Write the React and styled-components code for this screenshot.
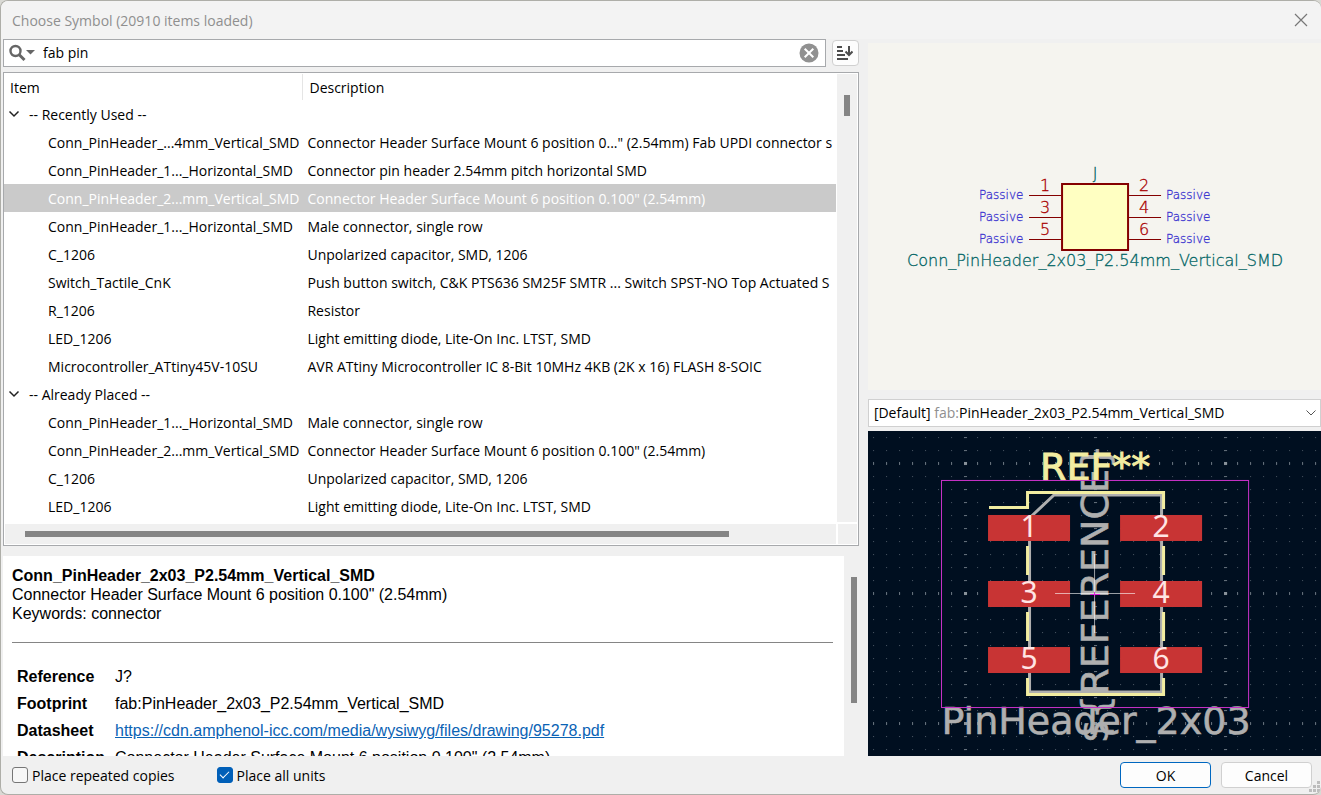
import React, { useState } from "react";
import styled, { createGlobalStyle } from "styled-components";

const recentlyUsed = [
  ["Conn_PinHeader_...4mm_Vertical_SMD", 'Connector Header Surface Mount 6 position 0..." (2.54mm) Fab UPDI connector s'],
  ["Conn_PinHeader_1..._Horizontal_SMD", "Connector pin header 2.54mm pitch horizontal SMD"],
  ["Conn_PinHeader_2...mm_Vertical_SMD", 'Connector Header Surface Mount 6 position 0.100" (2.54mm)'],
  ["Conn_PinHeader_1..._Horizontal_SMD", "Male connector, single row"],
  ["C_1206", "Unpolarized capacitor, SMD, 1206"],
  ["Switch_Tactile_CnK", "Push button switch, C&K PTS636 SM25F SMTR ... Switch SPST-NO Top Actuated S"],
  ["R_1206", "Resistor"],
  ["LED_1206", "Light emitting diode, Lite-On Inc. LTST, SMD"],
  ["Microcontroller_ATtiny45V-10SU", "AVR ATtiny Microcontroller IC 8-Bit 10MHz 4KB (2K x 16) FLASH 8-SOIC"],
];

const alreadyPlaced = [
  ["Conn_PinHeader_1..._Horizontal_SMD", "Male connector, single row"],
  ["Conn_PinHeader_2...mm_Vertical_SMD", 'Connector Header Surface Mount 6 position 0.100" (2.54mm)'],
  ["C_1206", "Unpolarized capacitor, SMD, 1206"],
  ["LED_1206", "Light emitting diode, Lite-On Inc. LTST, SMD"],
];

const groups = [
  { id: "recent", title: "-- Recently Used --", rows: recentlyUsed },
  { id: "placed", title: "-- Already Placed --", rows: alreadyPlaced },
];

function SymbolTree() {
  const [selected, setSelected] = useState("recent-2");
  const [closed, setClosed] = useState({});

  return (
    <Tree>
      <TreeBody>
        <TreeView>
          <TreeTable>
            <thead>
              <tr>
                <ItemHead>Item</ItemHead>
                <DescHead>Description</DescHead>
              </tr>
            </thead>
            {groups.map((group) => (
              <tbody key={group.id}>
                <tr>
                  <td colSpan={2}>
                    <GroupButton onClick={() => setClosed({ ...closed, [group.id]: !closed[group.id] })}>
                      <svg width="12" height="12" viewBox="0 0 12 12">
                        <path d="M1.5 3.5 6 8l4.5-4.5" fill="none" stroke="#222" strokeWidth="1.5" />
                      </svg>
                      {group.title}
                    </GroupButton>
                  </td>
                </tr>
                {!closed[group.id] && group.rows.map(([name, desc], index) => (
                  <Row
                    key={index}
                    $selected={selected === `${group.id}-${index}`}
                    onClick={() => setSelected(`${group.id}-${index}`)}
                  >
                    <NameCell>{name}</NameCell>
                    <DescCell>{desc}</DescCell>
                  </Row>
                ))}
              </tbody>
            ))}
          </TreeTable>
        </TreeView>
        <TreeScroll>
          <TreeThumb />
        </TreeScroll>
      </TreeBody>
      <TreeFoot>
        <HorizontalScroll>
          <HorizontalThumb />
        </HorizontalScroll>
        <ScrollCorner />
      </TreeFoot>
    </Tree>
  );
}

function SymbolPreview() {
  return (
    <SymbolCanvas viewBox="0 0 453 347" role="img" aria-label="Symbol preview">
      <PartText x="227" y="136">J</PartText>
      <rect x="194" y="141" width="66" height="66" fill="#ffffc2" stroke="#840000" strokeWidth="2" />
      {[0, 1, 2].map((i) => (
        <g key={i}>
          <path d={`M161 ${152.5 + i * 22}H193M261 ${152.5 + i * 22}H293`} stroke="#840000" strokeWidth="1.2" />
          <PinNumber x="177" y={148 + i * 22}>{i * 2 + 1}</PinNumber>
          <PinNumber x="276" y={148 + i * 22}>{i * 2 + 2}</PinNumber>
          <PinType x="111" y={156 + i * 22}>Passive</PinType>
          <PinType x="298" y={156 + i * 22}>Passive</PinType>
        </g>
      ))}
      <PartText x="227" y="223">Conn_PinHeader_2x03_P2.54mm_Vertical_SMD</PartText>
    </SymbolCanvas>
  );
}

function FootprintPreview() {
  const pads = [84, 150, 216];

  return (
    <FootprintCanvas viewBox="0 0 453 325" preserveAspectRatio="xMidYMid slice" role="img" aria-label="Footprint preview">
      <defs>
        <pattern id="minor" x="5" y="6" width="13" height="13" patternUnits="userSpaceOnUse">
          <rect width="1" height="1" fill="#46525f" />
        </pattern>
        <pattern id="row" x="5" y="31" width="13" height="130" patternUnits="userSpaceOnUse">
          <rect width="1" height="3" fill="#66717c" />
        </pattern>
        <pattern id="column" x="96" y="6" width="130" height="13" patternUnits="userSpaceOnUse">
          <rect width="3" height="1" fill="#66717c" />
        </pattern>
        <pattern id="major" x="96" y="31" width="130" height="130" patternUnits="userSpaceOnUse">
          <rect width="3" height="3" fill="#8a939b" />
        </pattern>
      </defs>
      {["minor", "row", "column", "major"].map((id) => (
        <rect key={id} width="453" height="325" fill={`url(#${id})`} />
      ))}
      <FabText transform="translate(240 163) rotate(-90)">{"${REFERENCE}"}</FabText>
      <FabText x="228" y="303">PinHeader_2x03</FabText>
      <path d="M161.5 87 186 64H293.5V261H161.5Z" fill="none" stroke="#afafaf" strokeWidth="3" />
      <g fill="none" stroke="#f2eda1" strokeWidth="3">
        <path d="M121 76.5H159.5V61.5H295.5V78" />
        <path d="M159.5 115V144M295.5 115V144M159.5 181V210M295.5 181V210" />
        <path d="M159.5 247V263.5H295.5V247" />
      </g>
      <SilkText x="172" y="49">REF**</SilkText>
      {pads.map((y, i) => (
        <g key={y}>
          <rect x="120" y={y} width="82" height="26" fill="#c83434" />
          <rect x="252" y={y} width="82" height="26" fill="#c83434" />
          <PadText x="161" y={y + 22}>{i * 2 + 1}</PadText>
          <PadText x="293" y={y + 22}>{i * 2 + 2}</PadText>
        </g>
      ))}
      <path d="M187 162.5H267M226.5 123V202" stroke="#fff" strokeOpacity="0.6" />
      <path d="M222 163.5H232M226.5 161V166" stroke="#d827d8" />
      <rect x="73.5" y="49.5" width="307" height="227" fill="none" stroke="#c832c8" />
    </FootprintCanvas>
  );
}

function App() {
  const [query, setQuery] = useState("fab pin");

  return (
    <>
      <GlobalStyle />
      <Dialog>
        <TitleBar>
          <Title>Choose Symbol (20910 items loaded)</Title>
          <CloseButton aria-label="Close">
            <svg width="14" height="14" viewBox="0 0 14 14">
              <path d="M1 1 13 13M13 1 1 13" stroke="#777" strokeWidth="1.2" />
            </svg>
          </CloseButton>
        </TitleBar>
        <Content>
          <LeftPane>
            <Toolbar>
              <SearchBox>
                <svg width="26" height="18" viewBox="0 0 26 18">
                  <circle cx="6.5" cy="7" r="5" fill="none" stroke="#666" strokeWidth="2.4" />
                  <path d="M10 10.5 15.5 16" stroke="#666" strokeWidth="3" />
                  <path d="M17 6h9l-4.5 4.5z" fill="#666" />
                </svg>
                <SearchInput aria-label="Search" value={query} onChange={(e) => setQuery(e.target.value)} />
                <IconButton aria-label="Clear search" onClick={() => setQuery("")}>
                  <svg width="20" height="20" viewBox="0 0 20 20">
                    <circle cx="10" cy="10" r="9.5" fill="#919191" />
                    <path d="M5.7 5.7 14.3 14.3M14.3 5.7 5.7 14.3" stroke="#fff" strokeWidth="2" />
                  </svg>
                </IconButton>
              </SearchBox>
              <SortButton aria-label="Sort">
                <svg width="16" height="14" viewBox="0 0 16 14">
                  <path d="M0 1h5M0 5h6M0 9h8M0 13h11" stroke="#4d4d4d" strokeWidth="2" />
                  <path d="M12 0v8M8.5 5.5 12 9l3.5-3.5" fill="none" stroke="#4d4d4d" strokeWidth="2" />
                </svg>
              </SortButton>
            </Toolbar>
            <SymbolTree />
            <Details>
              <DetailsText>
                <PartName>Conn_PinHeader_2x03_P2.54mm_Vertical_SMD</PartName>
                <p>Connector Header Surface Mount 6 position 0.100" (2.54mm)</p>
                <p>Keywords: connector</p>
                <Divider />
                <FieldTable>
                  <tbody>
                    <tr>
                      <th scope="row">Reference</th>
                      <td>J?</td>
                    </tr>
                    <tr>
                      <th scope="row">Footprint</th>
                      <td>fab:PinHeader_2x03_P2.54mm_Vertical_SMD</td>
                    </tr>
                    <tr>
                      <th scope="row">Datasheet</th>
                      <td>
                        <a href="https://cdn.amphenol-icc.com/media/wysiwyg/files/drawing/95278.pdf">
                          https://cdn.amphenol-icc.com/media/wysiwyg/files/drawing/95278.pdf
                        </a>
                      </td>
                    </tr>
                    <tr>
                      <th scope="row">Description</th>
                      <td>Connector Header Surface Mount 6 position 0.100" (2.54mm)</td>
                    </tr>
                  </tbody>
                </FieldTable>
              </DetailsText>
              <DetailsScroll>
                <DetailsThumb />
              </DetailsScroll>
            </Details>
          </LeftPane>
          <RightPane>
            <SymbolPreview />
            <FootprintPicker>
              <FootprintSelect aria-label="Footprint">
                <button>
                  <selectedcontent />
                </button>
                <option>
                  [Default] <span>fab:</span>PinHeader_2x03_P2.54mm_Vertical_SMD
                </option>
              </FootprintSelect>
              <svg width="10" height="6" viewBox="0 0 10 6">
                <path d="M.5.5 5 5 9.5.5" fill="none" stroke="#555" />
              </svg>
            </FootprintPicker>
            <FootprintPreview />
          </RightPane>
        </Content>
        <Footer>
          <Options>
            <Option>
              <Checkbox type="checkbox" />
              Place repeated copies
            </Option>
            <Option>
              <Checkbox type="checkbox" defaultChecked />
              Place all units
            </Option>
          </Options>
          <Button $primary>OK</Button>
          <Button>Cancel</Button>
          <Grip width="12" height="12" viewBox="0 0 12 12">
            <path d="M8 0h3v3H8zM4 4h3v3H4zM8 4h3v3H8zM0 8h3v3H0zM4 8h3v3H4zM8 8h3v3H8z" fill="#bdbdbd" />
          </Grip>
        </Footer>
      </Dialog>
    </>
  );
}

export default App;

const GlobalStyle = createGlobalStyle`
  * {
    box-sizing: border-box;
  }

  body {
    margin: 0;
    background: #d9d9d4;
    color: #000;
    font-family: "Open Sans", "Noto Sans", sans-serif;
    font-size: 14px;
  }

  button, input, select {
    font: inherit;
    color: inherit;
  }

  p {
    margin: 0;
  }
`;

const Dialog = styled.div`
  display: flex;
  flex-direction: column;
  height: 100vh;
  min-height: 700px;
  border: 1px solid #aeaea8;
  border-right: 0;
  border-radius: 8px;
  background: #f0f0f0;
  overflow: hidden;
`;

const TitleBar = styled.header`
  display: flex;
  align-items: center;
  justify-content: space-between;
  height: 38px;
  padding: 0 13px 0 11px;
  background: #f3f3f3;
`;

const Title = styled.h1`
  margin: 0;
  font-size: 14px;
  font-weight: 400;
  color: #8f8f8f;
`;

const CloseButton = styled.button`
  display: flex;
  padding: 0;
  border: 0;
  background: none;
`;

const Content = styled.main`
  display: grid;
  grid-template-columns: minmax(0, 17fr) minmax(0, 9fr);
  gap: 9px;
  flex: 1;
  min-height: 0;
  padding-left: 2px;
`;

const LeftPane = styled.section`
  display: flex;
  flex-direction: column;
  min-height: 0;
`;

const RightPane = styled.section`
  display: flex;
  flex-direction: column;
  min-height: 0;
  padding-top: 4px;
`;

const Toolbar = styled.div`
  display: flex;
  align-items: center;
  gap: 6px;
  margin-bottom: 5px;
`;

const SearchBox = styled.div`
  display: flex;
  align-items: center;
  flex: 1;
  height: 28px;
  padding: 0 6px 0 5px;
  border: 1px solid #a7a9ac;
  background: #fff;
`;

const SearchInput = styled.input`
  flex: 1;
  min-width: 0;
  padding: 0 8px 2px;
  border: 0;
  outline: 0;
  background: none;
`;

const IconButton = styled.button`
  display: flex;
  padding: 0;
  border: 0;
  background: none;
`;

const SortButton = styled.button`
  display: flex;
  align-items: center;
  justify-content: center;
  width: 27px;
  height: 26px;
  padding: 0;
  border: 1px solid #d0d0d0;
  border-radius: 4px;
  background: #fdfdfd;
`;

const Tree = styled.div`
  border: 1px solid #a7a9ac;
  background: #fff;
`;

const TreeBody = styled.div`
  display: flex;
  gap: 1px;
  padding: 1px 1px 2px 0;
`;

const TreeView = styled.div`
  flex: 1;
  min-width: 0;
  padding-bottom: 2px;
  overflow: hidden;
`;

const TreeTable = styled.table`
  width: 100%;
  table-layout: fixed;
  border-collapse: separate;
  border-spacing: 0;

  th, td {
    height: 28px;
    padding: 0;
    font-weight: 400;
    text-align: left;
    white-space: nowrap;
    overflow: hidden;
  }

  th {
    height: 26px;
  }
`;

const ItemHead = styled.th`
  width: 36%;

  && {
    padding-left: 6px;
    border-right: 1px solid #e5e5e5;
  }
`;

const DescHead = styled.th`
  && {
    padding-left: 6px;
  }
`;

const GroupButton = styled.button`
  display: flex;
  align-items: center;
  gap: 9px;
  padding: 0 4px;
  border: 0;
  background: none;
`;

const Row = styled.tr`
  background: ${props => props.$selected ? "#cacaca" : "transparent"};
  color: ${props => props.$selected ? "#fff" : "inherit"};
`;

const NameCell = styled.td`
  && {
    padding-left: 44px;
  }
`;

const DescCell = styled.td`
  && {
    padding-left: 4px;
  }
`;

const TreeScroll = styled.div`
  width: 20px;
  padding: 21px 7px 0;
  background: #f0f0f0;
`;

const TreeThumb = styled.div`
  height: 21px;
  background: #858585;
`;

const TreeFoot = styled.div`
  display: flex;
  gap: 2px;
  padding: 0 1px 1px;
`;

const HorizontalScroll = styled.div`
  flex: 1;
  height: 20px;
  padding: 7px 20px;
  background: #f0f0f0;
`;

const HorizontalThumb = styled.div`
  width: 89%;
  height: 6px;
  background: #858585;
`;

const ScrollCorner = styled.div`
  width: 19px;
  background: #f0f0f0;
`;

const Details = styled.div`
  display: flex;
  flex: 1;
  min-height: 0;
  margin-top: 10px;
`;

const DetailsText = styled.div`
  flex: 1;
  min-width: 0;
  padding: 10px 11px 0 9px;
  background: #fff;
  font-family: "Liberation Sans", Arial, sans-serif;
  font-size: 16px;
  line-height: 19px;
  overflow: hidden;
`;

const PartName = styled.h2`
  margin: 0;
  font-size: 16px;
  font-weight: 700;
`;

const Divider = styled.hr`
  margin: 19px 0 20px;
  border: 0;
  border-top: 1px solid #858585;
`;

const FieldTable = styled.table`
  border-collapse: collapse;

  th, td {
    height: 27px;
    padding: 0 5px;
    text-align: left;
    white-space: nowrap;
  }

  a {
    color: #0b63b5;
  }
`;

const DetailsScroll = styled.div`
  width: 15px;
  padding: 21px 2px 0 7px;
`;

const DetailsThumb = styled.div`
  height: 126px;
  background: #858585;
`;

const SymbolCanvas = styled.svg`
  flex: 347 1 0;
  min-height: 0;
  background: #f5f4ef;
`;

const PartText = styled.text`
  font: 200 16px "DejaVu Sans", sans-serif;
  fill: #006464;
  stroke: #006464;
  stroke-width: 0.3;
  text-anchor: middle;
`;

const PinNumber = styled.text`
  font: 200 16px "DejaVu Sans", sans-serif;
  fill: #a90000;
  stroke: #a90000;
  stroke-width: 0.3;
  text-anchor: middle;
`;

const PinType = styled.text`
  font: 200 12px "DejaVu Sans", sans-serif;
  fill: #3f38d0;
  stroke: #3f38d0;
  stroke-width: 0.3;
`;

const FootprintPicker = styled.div`
  display: flex;
  align-items: center;
  height: 28px;
  margin: 9px 0 4px;
  padding: 0 4px 0 5px;
  border: 1px solid #d0d0d0;
  background: #fff;
`;

const FootprintSelect = styled.select`
  flex: 1;
  min-width: 0;
  height: 26px;
  padding: 0;
  border: 0;
  background: none;

  &, &::picker(select) {
    appearance: base-select;
  }

  &::picker-icon {
    display: none;
  }

  button {
    line-height: 26px;
  }

  span {
    color: #8f8f8f;
  }
`;

const FootprintCanvas = styled.svg`
  flex: 325 1 0;
  min-height: 0;
  background: #000f20;
`;

const FabText = styled.text`
  font: 38px "DejaVu Sans", sans-serif;
  fill: #afafaf;
  stroke: #afafaf;
  stroke-width: 0.6;
  text-anchor: middle;
`;

const SilkText = styled.text`
  font: 38px "DejaVu Sans", sans-serif;
  fill: #f2eda1;
  stroke: #f2eda1;
`;

const PadText = styled.text`
  font: 30px "Noto Sans", sans-serif;
  fill: #ffe4e4;
  text-anchor: middle;
`;

const Footer = styled.footer`
  position: relative;
  display: flex;
  align-items: center;
  gap: 10px;
  height: 38px;
  padding: 0 9px 0 11px;
`;

const Options = styled.div`
  display: flex;
  flex: 1;
  gap: 42px;
`;

const Option = styled.label`
  display: flex;
  align-items: center;
  gap: 4px;
`;

const Checkbox = styled.input`
  appearance: none;
  width: 16px;
  height: 16px;
  margin: 0;
  border: 1px solid #767676;
  border-radius: 3px;
  background: #f7f7f7;

  &:checked {
    display: grid;
    place-items: center;
    border-color: #005fb8;
    background: #005fb8;
  }

  &:checked::before {
    content: "";
    width: 8px;
    height: 4px;
    margin-bottom: 3px;
    border-left: 1px solid #fff;
    border-bottom: 1px solid #fff;
    transform: rotate(-45deg);
  }
`;

const Button = styled.button`
  width: 91px;
  height: 26px;
  padding: 0;
  border: 1px solid ${props => props.$primary ? "#0067c0" : "#d0d0d0"};
  border-radius: 4px;
  background: #fdfdfd;
`;

const Grip = styled.svg`
  position: absolute;
  right: 0;
  bottom: 1px;
`;
